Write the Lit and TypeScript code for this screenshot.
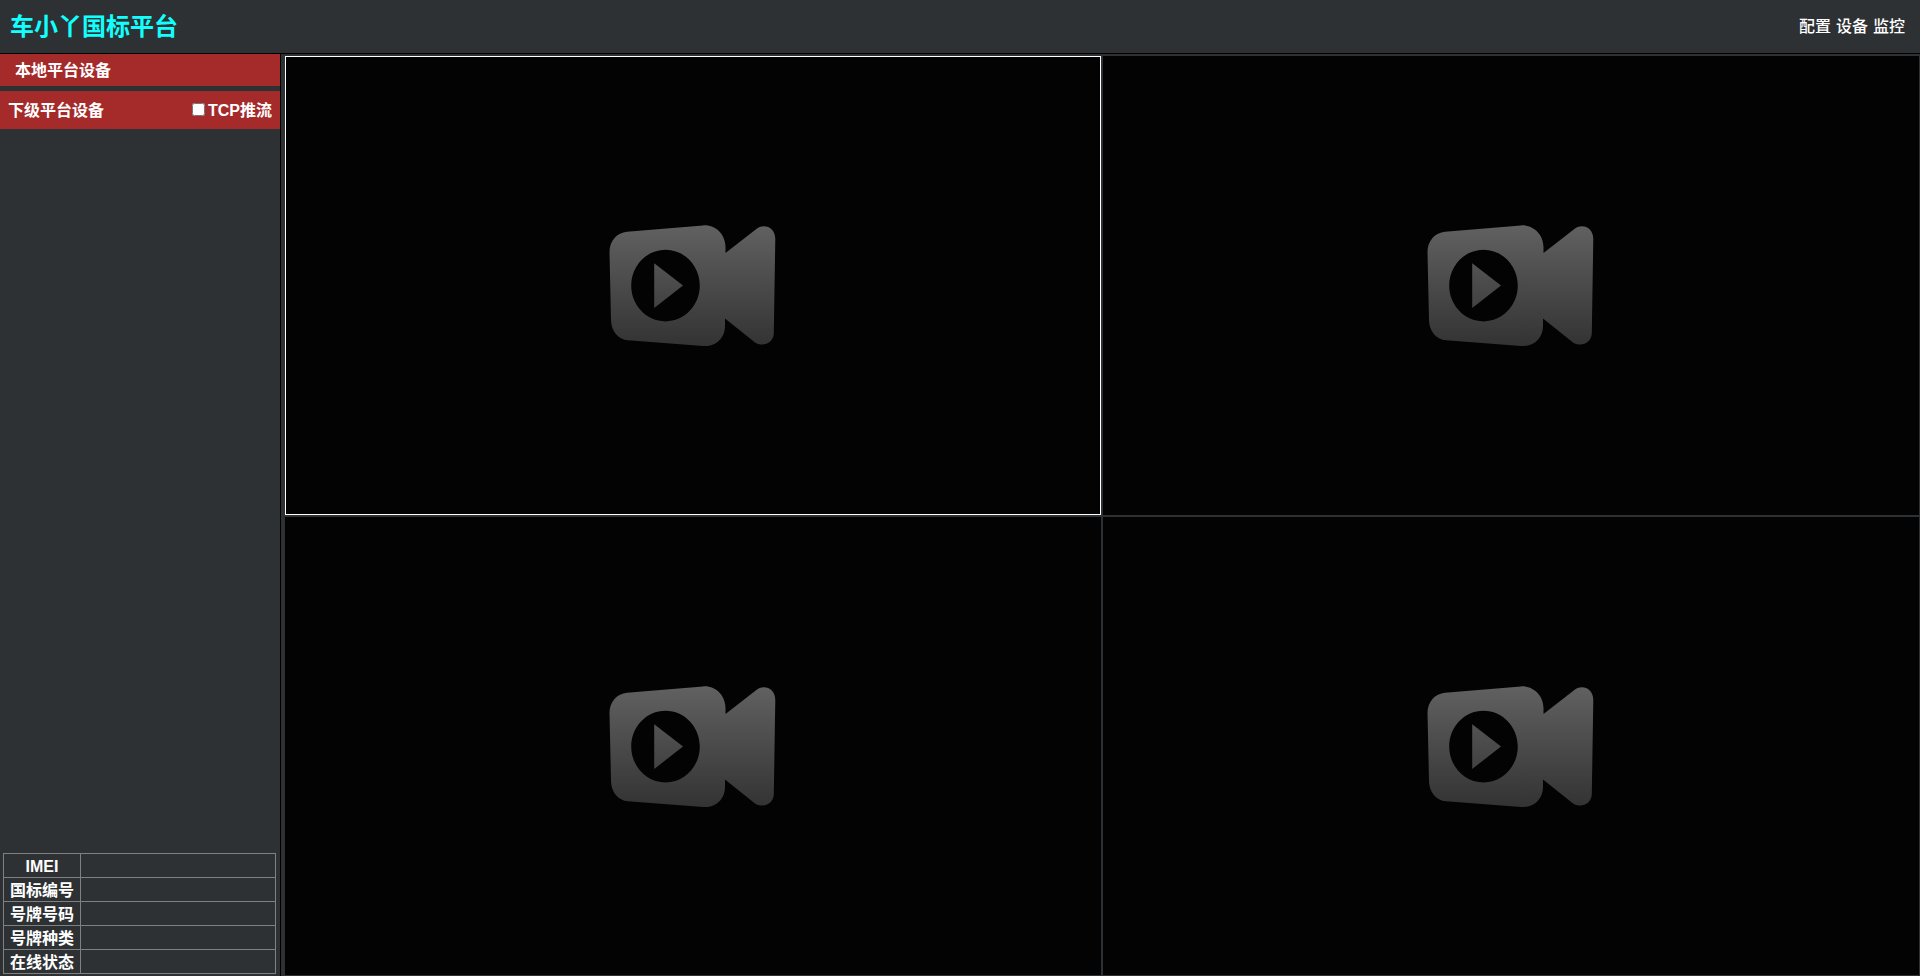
import { LitElement, html, css } from "lit";
import { customElement, property, state } from "lit/decorators.js";

@customElement("camera-cell")
class CameraCell extends LitElement {
  @property({ type: Boolean, reflect: true }) selected = false;

  static styles = css`
    :host {
      box-sizing: border-box;
      display: flex;
      align-items: center;
      justify-content: center;
      min-width: 0;
      min-height: 0;
      background: #030303;
      border: 1px solid #030303;
    }
    :host([selected]) {
      border-color: #fff;
    }
    .camera {
      width: 200px;
      height: 150px;
    }
  `;

  render() {
    return html`
      <svg class="camera" viewBox="3 0 200 150" aria-hidden="true">
        <defs>
          <linearGradient id="metal" gradientUnits="userSpaceOnUse" x1="0" y1="15" x2="0" y2="136">
            <stop offset="0" stop-color="#616161" />
            <stop offset="1" stop-color="#333" />
          </linearGradient>
        </defs>
        <path
          fill="url(#metal)"
          fill-rule="evenodd"
          d="M37 21.700 L113 15.400 C126 14.500 135.500 25 135.500 37 V43 L167 18.500 C174 13.500 185.300 17 185.300 29 L183.800 123 C183.800 133 173 137.500 165 132.500 L135 108.500 V116 C135 128 126 137 113 136 L38 130.300 C28 129.500 21.200 121 21 110 L19.500 42 C19.500 31 27 22.500 37 21.700 Z
             M75.500 39.800 C56.500 39.800 41.200 55.800 41.200 75.600 C41.200 95.400 56.500 111.400 75.500 111.400 C94.500 111.400 109.800 95.400 109.800 75.600 C109.800 55.800 94.500 39.800 75.500 39.800 Z
             M64.200 53.300 L93 75.500 L64.200 98 Z"
        />
      </svg>
    `;
  }
}

@customElement("app-root")
class AppRoot extends LitElement {
  @state() private active = 0;

  static styles = css`
    :host {
      display: flex;
      flex-direction: column;
      height: 100vh;
      overflow: hidden;
      background: #2e3134;
      color: #fff;
      font: 16px/24px "Liberation Sans", "Noto Sans CJK SC", sans-serif;
    }
    .header {
      display: flex;
      align-items: center;
      justify-content: space-between;
      box-sizing: border-box;
      height: 54px;
      padding: 0 15px 0 10px;
      border-bottom: 1px solid #000;
    }
    .title {
      margin: 0;
      font-size: 24px;
      line-height: 32px;
      font-weight: bold;
      color: #1ff;
    }
    .nav {
      display: flex;
      gap: 5px;
      font-weight: 500;
    }
    .nav a {
      color: inherit;
      text-decoration: none;
    }
    .main {
      display: flex;
      flex: 1;
      min-height: 0;
    }
    .sidebar {
      display: flex;
      flex-direction: column;
      gap: 5px;
      flex: 0 0 280px;
      border-right: 1px solid #000;
      font-weight: bold;
    }
    .group {
      display: flex;
      align-items: center;
      justify-content: space-between;
      margin: 0;
      font-size: 16px;
      background: #a52a2a;
    }
    .local {
      padding: 5px 15px 3px;
    }
    .lower {
      padding: 8px 8px 6px;
    }
    .tcp {
      display: flex;
      align-items: center;
      gap: 3px;
    }
    .tcp input {
      width: 13px;
      height: 13px;
      margin: 0 0 3px;
    }
    .info {
      margin: auto 4px 2px 3px;
      border-collapse: collapse;
    }
    .info th,
    .info td {
      box-sizing: border-box;
      height: 24px;
      padding: 2px 0 0;
      line-height: 21px;
      border: 1px solid #808080;
    }
    .info th {
      width: 77px;
    }
    .grid {
      display: grid;
      flex: 1;
      grid-template: 1fr 1fr / 1fr 1fr;
      gap: 2px;
      padding: 2px 1px 1px 4px;
    }
  `;

  render() {
    return html`
      <header class="header">
        <h1 class="title">车小丫国标平台</h1>
        <nav class="nav"><a href="#config">配置</a><a href="#device">设备</a><a href="#monitor">监控</a></nav>
      </header>
      <div class="main">
        <aside class="sidebar">
          <h2 class="group local">本地平台设备</h2>
          <div class="group lower">
            <span>下级平台设备</span>
            <label class="tcp"><input type="checkbox" />TCP推流</label>
          </div>
          <table class="info">
            ${["IMEI", "国标编号", "号牌号码", "号牌种类", "在线状态"].map(
              (name) => html`<tr><th scope="row">${name}</th><td></td></tr>`
            )}
          </table>
        </aside>
        <main class="grid">
          ${[0, 1, 2, 3].map(
            (i) => html`<camera-cell ?selected=${this.active === i} @click=${() => (this.active = i)}></camera-cell>`
          )}
        </main>
      </div>
    `;
  }
}
